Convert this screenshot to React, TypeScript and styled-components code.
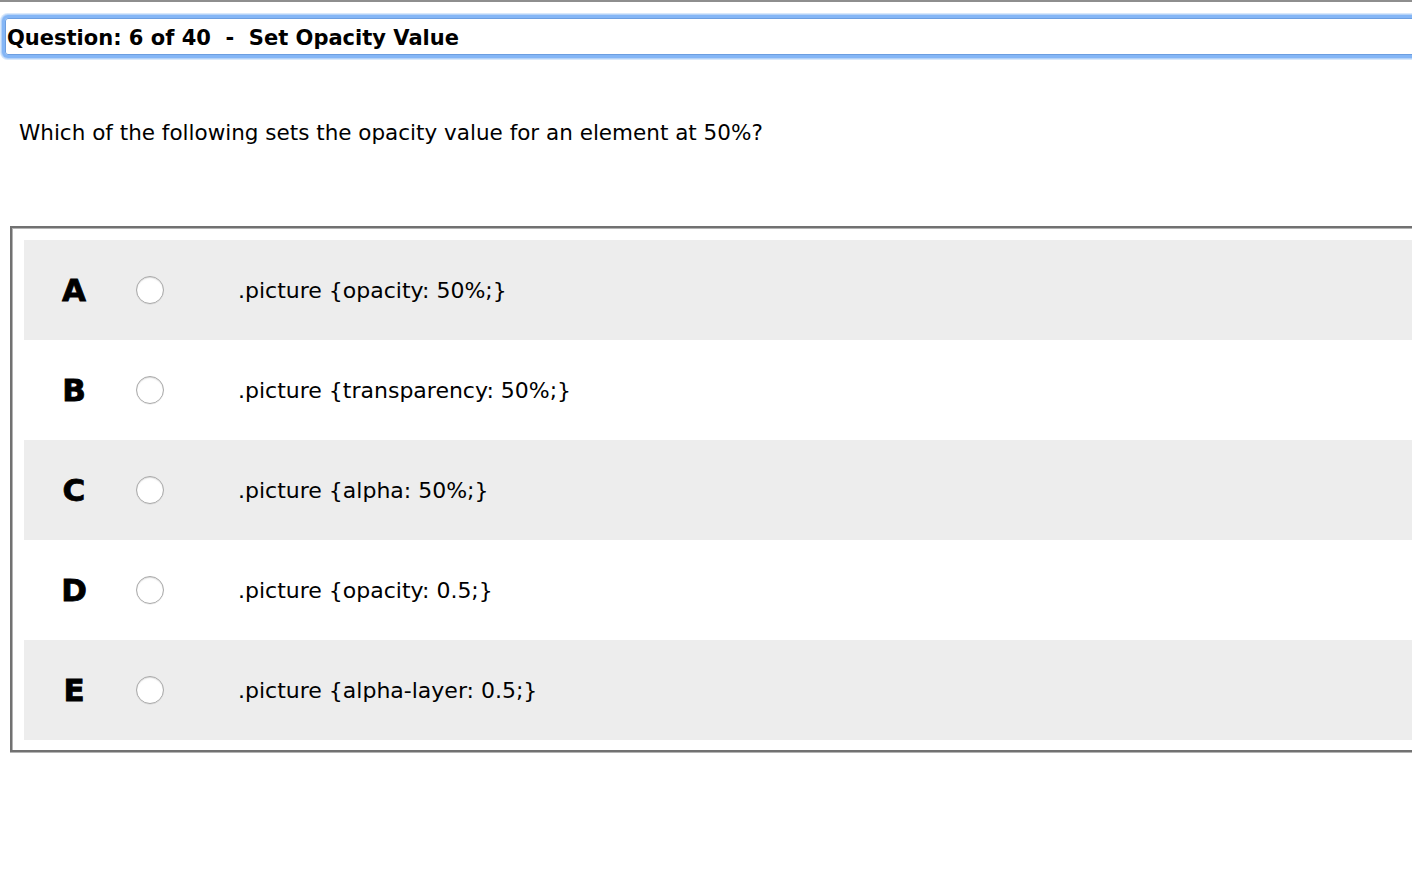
import React from 'react';
import styled, {createGlobalStyle} from 'styled-components';

const GlobalStyle = createGlobalStyle`
  html, body {
    margin: 0;
    padding: 0;
    background: #fff;
    overflow: hidden;
  }
  body {
    font-family: "DejaVu Sans", Verdana, sans-serif;
    color: #000;
  }
`;

type Option = {
  letter: string
  text: string
}

const options: Option[] = [
  {letter: 'A', text: '.picture {opacity: 50%;}'},
  {letter: 'B', text: '.picture {transparency: 50%;}'},
  {letter: 'C', text: '.picture {alpha: 50%;}'},
  {letter: 'D', text: '.picture {opacity: 0.5;}'},
  {letter: 'E', text: '.picture {alpha-layer: 0.5;}'},
];

const Page = styled.div`
  width: 1412px;
  height: 890px;
  border-top: 2px solid #8e8e8e;
  box-sizing: border-box;
`;

const Title = styled.div`
  margin: 16px -20px 0 5px;
  height: 33px;
  padding: 2px 0 0 1px;
  box-sizing: content-box;
  border: 1px solid #6c9ee0;
  box-shadow: 0 0 0 3px #84b6f6, 0 0 0 4px #b4d2f8, 0 0 0 5px #d8e8fb;
  border-radius: 3px;
  display: flex;
  align-items: center;
  font-size: 21px;
  font-weight: bold;
  white-space: pre;
`;

const Prompt = styled.p`
  margin: 63px 0 0 19px;
  font-size: 21.5px;
  line-height: 30px;
`;

const Choices = styled.div`
  margin: 78px -40px 0 10px;
  border: 2px solid #717171;
  box-shadow: inset 1px 1px 0 #b4b4b4, 0 1px 0 #b4b4b4;
  padding: 12px 0 10px 12px;
`;

const Row = styled.label<{$shaded: boolean}>`
  display: grid;
  grid-template-columns: 100px 52px 1fr;
  align-items: center;
  height: 100px;
  background: ${p => (p.$shaded ? '#ededed' : '#fff')};
`;

const Letter = styled.span`
  text-align: center;
  font-size: 31px;
  font-weight: bold;
  -webkit-text-stroke: 0.8px #000;
`;

const Radio = styled.input`
  appearance: none;
  justify-self: center;
  width: 28px;
  height: 28px;
  margin: 0;
  border-radius: 50%;
  border: 1px solid #a9a9a9;
  background: radial-gradient(circle at 50% 60%, #fff 60%, #f1f1f1 100%);
  box-shadow: inset 0 1px 1px rgba(0, 0, 0, 0.12), 0 0.5px 0.5px rgba(0, 0, 0, 0.1);
`;

const Code = styled.span`
  padding-left: 62px;
  font-size: 22px;
`;

export default function App() {
  return (
    <Page>
      <GlobalStyle/>
      <Title>Question: 6 of 40  -  Set Opacity Value</Title>
      <Prompt>Which of the following sets the opacity value for an element at 50%?</Prompt>
      <Choices>
        {options.map((o, i) => (
          <Row key={o.letter} $shaded={i % 2 === 0}>
            <Letter>{o.letter}</Letter>
            <Radio type="radio" name="answer"/>
            <Code>{o.text}</Code>
          </Row>
        ))}
      </Choices>
    </Page>
  );
}
